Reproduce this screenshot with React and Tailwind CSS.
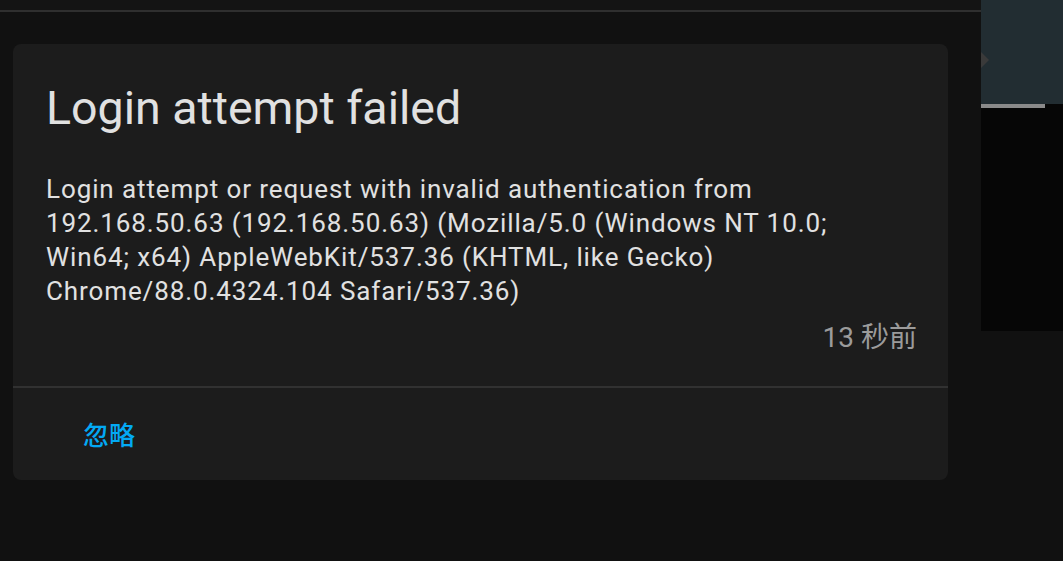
import React from 'react'

export default function App() {
  return (
    <div
      className="flex w-[1063px] h-[561px] overflow-hidden bg-[#111111]"
      style={{ fontFamily: 'Roboto, "Noto Sans CJK SC", sans-serif' }}
    >
      <div className="flex flex-col w-[981px]">
        <div className="h-[10px] bg-[#141414] border-b-2 border-[#2f2f2f] box-content" />
        <div className="mt-[32px] ml-[13px] w-[935px] rounded-[8px] bg-[#1c1c1c]">
          <div className="pl-[33px] pr-[31px] pt-[36px]">
            <h1 className="text-[46.5px] leading-[56px] text-[#e1e1e1] font-normal">
              Login attempt failed
            </h1>
            <p className="mt-[36px] text-[26px] leading-[34px] tracking-[0.9px] text-[#e1e1e1]">
              Login attempt or request with invalid authentication from 192.168.50.63 (192.168.50.63) (Mozilla/5.0 (Windows NT 10.0; Win64; x64) AppleWebKit/537.36 (KHTML, like Gecko) Chrome/88.0.4324.104 Safari/537.36)
            </p>
            <div className="mt-[13px] text-right text-[28px] leading-[34px] text-[#9b9b9b]">
              13 秒前
            </div>
          </div>
          <div className="mt-[31px] h-[2px] bg-[#313131]" />
          <div className="px-[70px] pt-[4px] h-[92px] flex items-center">
            <button className="text-[26px] font-medium text-[#03a9f4]">忽略</button>
          </div>
        </div>
      </div>
      <div className="relative flex flex-col w-[82px]">
        <div className="h-[104px] bg-[#222d32]" />
        <div className="flex h-[4px]">
          <div className="w-[64px] bg-[#8a8a8a]" />
          <div className="flex-1 bg-[#060606]" />
        </div>
        <div className="h-[223px] bg-[#060606]" />
        <div className="flex-1 bg-[#111111]" />
        <svg className="absolute left-0 top-[52px]" width="8" height="16" viewBox="0 0 8 16">
          <polygon points="0,0 8,8 0,16" fill="#3a3a3a" />
        </svg>
      </div>
    </div>
  )
}
